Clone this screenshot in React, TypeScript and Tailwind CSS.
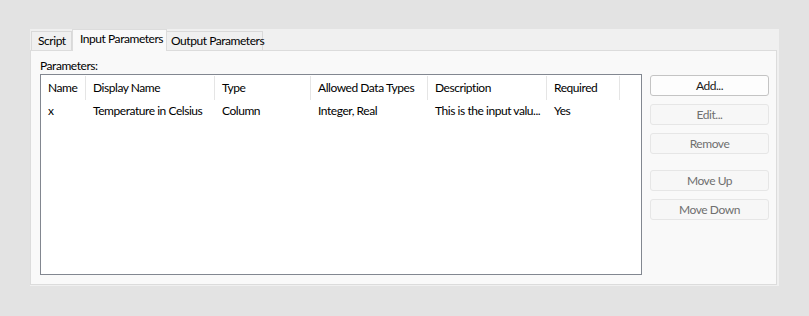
import React from "react";

const cols = [
  { label: "Name", w: 45 },
  { label: "Display Name", w: 129 },
  { label: "Type", w: 96 },
  { label: "Allowed Data Types", w: 117 },
  { label: "Description", w: 119 },
  { label: "Required", w: 73 },
];

const row = ["x", "Temperature in Celsius", "Column", "Integer, Real", "This is the input valu...", "Yes"];

function Btn({ label, enabled, className }: { label: string; enabled?: boolean; className?: string }) {
  return (
    <div
      className={
        "w-[119px] h-[21px] rounded-[3px] border flex items-center justify-center " +
        (enabled
          ? "border-[#c4c4c4] bg-[#fdfdfd] text-[#1a1a1a]"
          : "border-[#e6e6e6] bg-[#f7f7f7] text-[#6f6f6f]") +
        " " +
        (className ?? "")
      }
    >
      {label}
    </div>
  );
}

export default function App() {
  return (
    <div
      className="w-[809px] h-[316px] bg-[#e3e3e3] pt-[29px] pl-[30px] text-[12px] tracking-[-0.45px] text-black"
      style={{ fontFamily: 'Lato, "Liberation Sans", sans-serif' }}
    >
      <div className="w-[749px] h-[257px] bg-[#f0f0f0] flex flex-col">
        <div className="h-[21px] flex items-end pl-px whitespace-nowrap">
          <div className="h-[19px] w-[41px] border border-b-0 border-[#d9d9d9] bg-[#f0f0f0] pl-[6px] leading-[18px]">
            Script
          </div>
          <div className="relative z-10 h-[22px] -mb-px w-[95px] border border-b-0 border-[#dcdcdc] bg-[#f9f9f9] pl-[7px] leading-[18px]">
            Input Parameters
          </div>
          <div className="h-[19px] w-[96px] border border-b-0 border-l-0 border-[#d9d9d9] bg-[#f0f0f0] pl-[4px] leading-[18px]">
            Output Parameters
          </div>
        </div>
        <div className="w-[747px] h-[235px] border border-[#dcdcdc] bg-[#f9f9f9] pl-[9px] pt-[7px]">
          <div className="leading-[16px]">Parameters:</div>
          <div className="flex">
            <div className="w-[602px] h-[201px] border border-[#828790] bg-white">
              <div className="flex h-[25px] pt-[1px]">
                {cols.map((c) => (
                  <div
                    key={c.label}
                    className="h-[24px] border-r border-[#e5e5e5] pl-[7px] leading-[24px] whitespace-nowrap"
                    style={{ width: c.w }}
                  >
                    {c.label}
                  </div>
                ))}
              </div>
              <div className="flex h-[20px] leading-[20px] pt-px">
                {row.map((t, i) => (
                  <div key={i} className="pl-[7px] whitespace-nowrap overflow-hidden" style={{ width: cols[i].w }}>
                    {t}
                  </div>
                ))}
              </div>
            </div>
            <div className="ml-[8px] pt-px flex flex-col">
              <Btn label="Add..." enabled />
              <Btn label="Edit..." className="mt-[8px]" />
              <Btn label="Remove" className="mt-[8px]" />
              <Btn label="Move Up" className="mt-[16px]" />
              <Btn label="Move Down" className="mt-[8px]" />
            </div>
          </div>
        </div>
      </div>
    </div>
  );
}
